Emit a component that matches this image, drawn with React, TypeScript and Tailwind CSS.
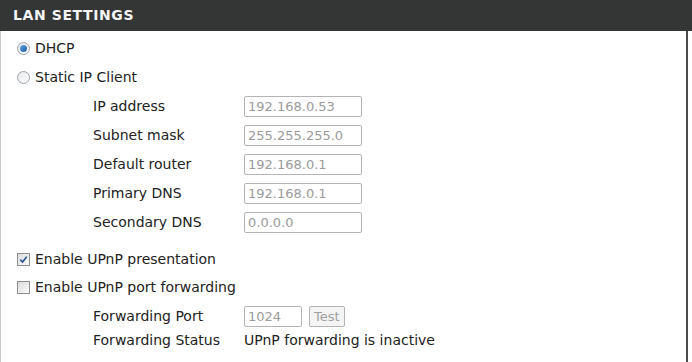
import { useState } from 'react'

const font = { fontFamily: 'Tahoma, "DejaVu Sans", Verdana, sans-serif' }

type Field = { label: string; value: string }

const ipFields: Field[] = [
  { label: 'IP address', value: '192.168.0.53' },
  { label: 'Subnet mask', value: '255.255.255.0' },
  { label: 'Default router', value: '192.168.0.1' },
  { label: 'Primary DNS', value: '192.168.0.1' },
  { label: 'Secondary DNS', value: '0.0.0.0' },
]

function Radio({ checked }: { checked: boolean }) {
  return (
    <span className="flex h-[13px] w-[13px] items-center justify-center rounded-full border border-[#9aa3ad] bg-gradient-to-br from-[#e6e8ea] to-[#fdfdfd]">
      {checked && (
        <span className="h-[7px] w-[7px] rounded-full bg-gradient-to-br from-[#5fa0e0] to-[#1d5fa8]" />
      )}
    </span>
  )
}

function Checkbox({ checked }: { checked: boolean }) {
  return (
    <span className="flex h-[13px] w-[13px] items-center justify-center border border-[#8f8f8f] bg-gradient-to-br from-[#dcdcdc] to-[#fbfbfb]">
      {checked && (
        <svg viewBox="0 0 10 10" className="h-[9px] w-[9px]">
          <path d="M1.5 5.2 L4 7.8 L8.6 1.8" fill="none" stroke="#2a4f8f" strokeWidth="1.8" />
        </svg>
      )}
    </span>
  )
}

export default function App() {
  const [mode] = useState<'dhcp' | 'static'>('dhcp')

  return (
    <div className="h-[362px] w-[692px] overflow-hidden bg-white text-[14px] text-[#222]" style={font}>
      {/* Header */}
      <div className="flex h-[31px] items-center bg-[#343635] px-[13px]">
        <h1 className="text-[14px] font-bold tracking-[0.6px] text-[#f4f4f4]">LAN SETTINGS</h1>
      </div>

      <div className="mr-[4px] h-[331px] border-l border-r-2 border-l-[#c8c8c8] border-r-[#4a4a4a] pl-[15px] pt-[3px]">
        <div className="flex h-[29px] items-center gap-[5px] pl-[1px]">
          <Radio checked={mode === 'dhcp'} />
          <span>DHCP</span>
        </div>
        <div className="flex h-[29px] items-center gap-[5px] pl-[1px]">
          <Radio checked={mode === 'static'} />
          <span>Static IP Client</span>
        </div>

        {ipFields.map((f) => (
          <div key={f.label} className="flex h-[29px] items-center pl-[77px]">
            <span className="w-[151px]">{f.label}</span>
            <div className="flex h-[21px] w-[118px] items-center rounded-[2px] border border-[#b4b4b4] px-[3px] text-[13px] text-[#9a9a9a]">
              {f.value}
            </div>
          </div>
        ))}

        <div className="mt-[8px] flex h-[29px] items-center gap-[5px] pl-[1px]">
          <Checkbox checked />
          <span>Enable UPnP presentation</span>
        </div>
        <div className="-mt-[1px] flex h-[29px] items-center gap-[5px] pl-[1px]">
          <Checkbox checked={false} />
          <span>Enable UPnP port forwarding</span>
        </div>
        <div className="flex h-[29px] items-center pl-[77px]">
          <span className="w-[151px]">Forwarding Port</span>
          <div className="flex h-[21px] w-[58px] items-center rounded-[2px] border border-[#b4b4b4] px-[3px] text-[13px] text-[#9a9a9a]">
            1024
          </div>
          <button className="ml-[7px] h-[21px] rounded-[2px] border border-[#b4b4b4] bg-[#f4f4f4] px-[4px] text-[13px] text-[#a0a0a0]">
            Test
          </button>
        </div>
        <div className="flex h-[18px] items-center pl-[77px]">
          <span className="w-[151px]">Forwarding Status</span>
          <span>UPnP forwarding is inactive</span>
        </div>
      </div>
    </div>
  )
}
